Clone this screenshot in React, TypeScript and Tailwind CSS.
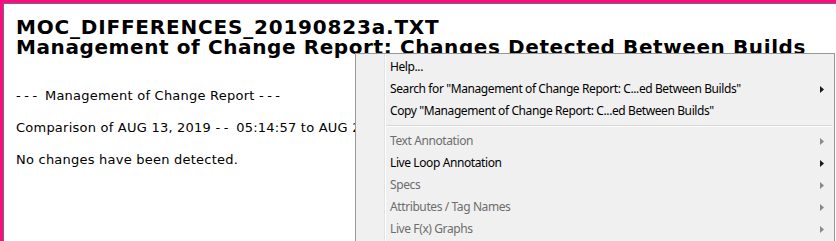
import React from 'react';

type Item = { label: string; disabled?: boolean; sub?: boolean } | 'sep';

const ITEMS: Item[] = [
  { label: 'Help...' },
  { label: 'Search for "Management of Change Report: C...ed Between Builds"', sub: true },
  { label: 'Copy "Management of Change Report: C...ed Between Builds"' },
  'sep',
  { label: 'Text Annotation', disabled: true, sub: true },
  { label: 'Live Loop Annotation', sub: true },
  { label: 'Specs', disabled: true, sub: true },
  { label: 'Attributes / Tag Names', disabled: true, sub: true },
  { label: 'Live F(x) Graphs', disabled: true, sub: true },
];

const Arrow = ({ disabled }: { disabled?: boolean }) => (
  <svg width="4" height="7" viewBox="0 0 4 7" className="shrink-0">
    <path d="M0 0 L4 3.5 L0 7 Z" fill={disabled ? '#8a8a8a' : '#1a1a1a'} />
  </svg>
);

const ContextMenu = () => (
  <div className="absolute left-[355px] top-[53px] w-[480px] h-[200px] bg-[#f0f0f0] border border-[#979797] pt-[2px] font-['Noto_Sans',sans-serif] text-[12px] tracking-[-0.4px]">
    {/* gutter line */}
    <div className="absolute left-[28px] top-0 bottom-0 w-px bg-[#e2e3e3]" />
    <div className="absolute left-[29px] top-0 bottom-0 w-px bg-white" />
    {ITEMS.map((it, i) =>
      it === 'sep' ? (
        <div key={i} className="h-[8px] flex flex-col justify-center pl-[29px] pr-[2px]">
          <div className="h-px bg-[#d7d7d7]" />
          <div className="h-px bg-white" />
        </div>
      ) : (
        <div
          key={i}
          className={`h-[22px] flex items-center pl-[34px] pr-[10px] ${it.disabled ? 'text-[#6d6d6d]' : 'text-black'}`}
        >
          <span className="flex-1 whitespace-nowrap">{it.label}</span>
          {it.sub && <Arrow disabled={it.disabled} />}
        </div>
      )
    )}
  </div>
);

export default function App() {
  return (
    <div className="relative w-[836px] h-[241px] overflow-hidden bg-white">
      <div className="h-full border-t-[3px] border-l-[3px] border-[#ff0a82]">
        <div className="h-full border-t border-l border-[#6e6e6e] pl-[12px] pt-[13px] font-['DejaVu_Sans',sans-serif] text-black">
          <div className="font-bold text-[20px] leading-[20px] whitespace-nowrap">
            <div className="tracking-[0.8px]">MOC_DIFFERENCES_20190823a.TXT</div>
            <div className="tracking-[0.6px]">Management of Change Report: Changes Detected Between Builds</div>
          </div>
          <div className="mt-[31px] text-[13px] leading-[16px] tracking-[0.23px] whitespace-nowrap flex flex-col gap-[16px]">
            <div>
              <span className="tracking-[3.5px]">---</span> Management of Change Report <span className="tracking-[3.5px]">---</span>
            </div>
            <div>
              Comparison of AUG 13, 2019 <span className="tracking-[3.5px]">--</span> 05:14:57 to AUG 23, 2019 <span className="tracking-[3.5px]">--</span> 05:14:57
            </div>
            <div>No changes have been detected.</div>
          </div>
        </div>
      </div>
      <ContextMenu />
    </div>
  );
}
